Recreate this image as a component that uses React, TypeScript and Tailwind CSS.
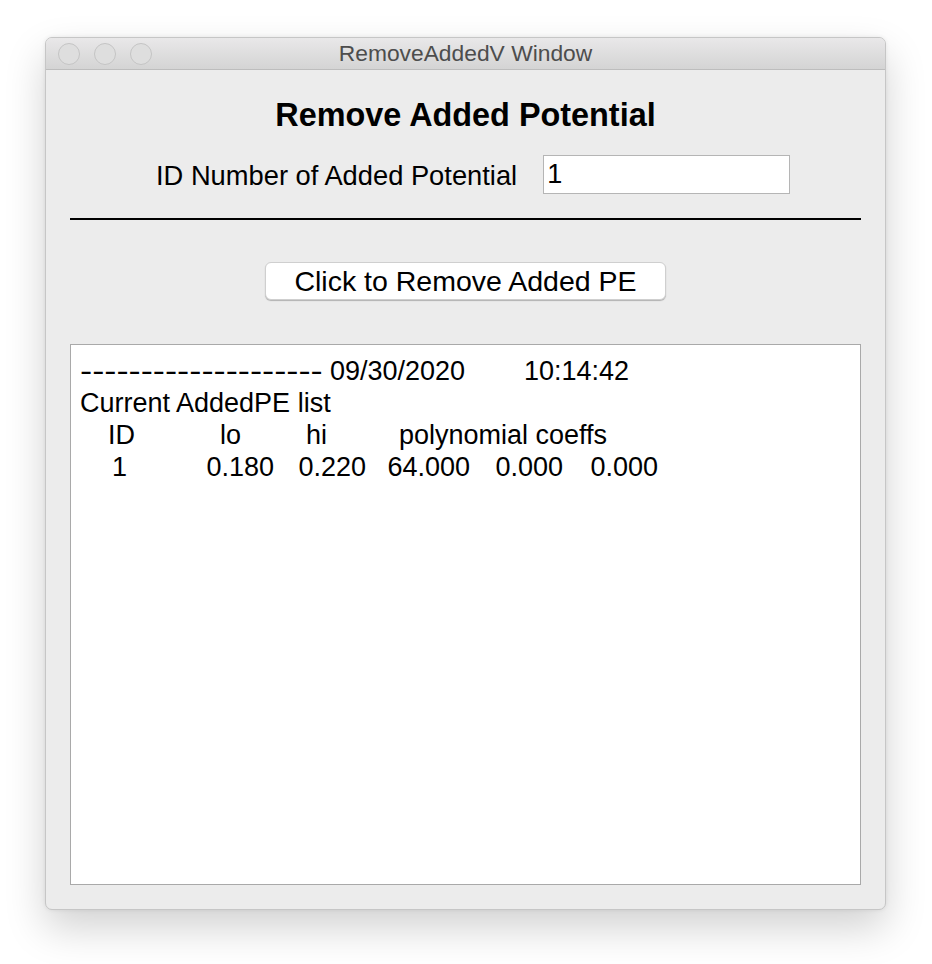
import React from 'react'

const FONT = { fontFamily: '"Liberation Sans", Arial, sans-serif' }

function TrafficLight() {
  return <span className="h-[22px] w-[22px] rounded-full border border-[#c4c4c4] bg-[#dedede]" />
}

export default function App() {
  return (
    <div className="h-[964px] w-full bg-white pl-[45px] pt-[37px]" style={FONT}>
      <div className="flex h-[873px] w-[841px] flex-col overflow-hidden rounded-[7px] border border-[#c6c6c6] bg-[#ececec] shadow-[0_18px_40px_rgba(0,0,0,0.18),0_0_4px_rgba(0,0,0,0.08)]">
        {/* title bar */}
        <div className="relative flex h-[32px] shrink-0 items-center border-b border-[#bdbdbd] bg-gradient-to-b from-[#e9e8e9] to-[#d4d4d4] pl-[12px]">
          <div className="flex gap-[14px]">
            <TrafficLight />
            <TrafficLight />
            <TrafficLight />
          </div>
          <div className="absolute inset-0 flex items-center justify-center text-[22.8px] text-[#4d4d4d]">
            RemoveAddedV Window
          </div>
        </div>

        <div className="flex flex-1 flex-col px-[24px] pb-[24px] pt-[26px]">
          <h1 className="text-center text-[32.4px] font-bold leading-[38px] text-black">Remove Added Potential</h1>

          <div className="mt-[21px] flex items-center pl-[86px]">
            <span className="pt-[3px] text-[27.3px] leading-[30px] text-black">ID Number of Added Potential</span>
            <div className="ml-[26px] flex h-[39px] w-[247px] items-center border border-[#b5b5b5] bg-white pl-[3px] text-[27px] text-black">
              1
            </div>
          </div>

          <div className="mt-[24px] h-[2px] w-full bg-black" />

          <div className="mt-[42px] flex justify-center">
            <button
              type="button"
              className="flex h-[38px] w-[401px] items-center justify-center rounded-[6px] border border-[#cfcfcf] bg-white text-[28.5px] text-black shadow-[0_1px_1px_rgba(0,0,0,0.25)]"
            >
              Click to Remove Added PE
            </button>
          </div>

          <div className="mt-[44px] flex-1 border border-[#a9a9a9] bg-white pl-[9px] pt-[10px] text-[27px] leading-[32px] text-black">
            <div className="flex">
              <span className="w-[250px]">
                <span className="inline-block origin-left scale-x-[1.35]">--------------------</span>
              </span>
              <span className="w-[194px]">09/30/2020</span>
              <span>10:14:42</span>
            </div>
            <div>Current AddedPE list</div>
            <div className="flex">
              <span className="ml-[28px] w-[112px]">ID</span>
              <span className="w-[86px]">lo</span>
              <span className="w-[93px]">hi</span>
              <span>polynomial coeffs</span>
            </div>
            <div className="flex">
              <span className="w-[47px] text-right">1</span>
              <span className="w-[147px] text-right">0.180</span>
              <span className="w-[92px] text-right">0.220</span>
              <span className="w-[104px] text-right">64.000</span>
              <span className="w-[93px] text-right">0.000</span>
              <span className="w-[95px] text-right">0.000</span>
            </div>
          </div>
        </div>
      </div>
    </div>
  )
}
